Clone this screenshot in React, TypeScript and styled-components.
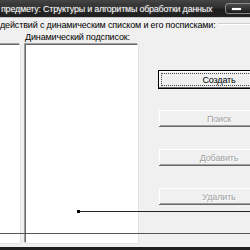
import React from 'react';
import styled, { createGlobalStyle } from 'styled-components';

const GlobalStyle = createGlobalStyle`
  html, body {
    margin: 0;
    padding: 0;
    background: #f0f0f0;
  }
  body {
    font-family: 'Liberation Sans', Arial, sans-serif;
  }
`;

const Window = styled.div`
  position: relative;
  width: 250px;
  height: 250px;
  overflow: hidden;
  display: flex;
  flex-direction: column;
  background: #f0f0f0;
  font-size: 9px;
  letter-spacing: -0.15px;
  color: #000;
`;

const TitleBar = styled.div`
  height: 17px;
  flex: none;
  display: flex;
  align-items: center;
  justify-content: space-between;
  background: linear-gradient(#454545 0%, #2e2e2e 45%, #1c1c1c 55%, #222 100%);
  border-bottom: 1px solid #c8c8c8;
`;

const Caption = styled.span`
  color: #fff;
  font-size: 9px;
  letter-spacing: -0.25px;
  padding-left: 1px;
  white-space: nowrap;
  text-shadow: 0 0 3px rgba(255, 255, 255, 0.35);
`;

const CaptionButton = styled.div`
  flex: none;
  width: 34px;
  height: 11px;
  margin-right: -9px;
  border: 1px solid #8a8a8a;
  border-radius: 3px;
  background: linear-gradient(#4a4a4a, #1a1a1a);
  display: flex;
  align-items: center;
  padding-left: 6px;
  box-sizing: border-box;

  &::before {
    content: '';
    width: 9px;
    height: 2px;
    background: #fff;
    box-shadow: 0 0 1px #fff;
  }
`;

const Content = styled.div`
  flex: 1;
  display: flex;
  flex-direction: column;
`;

const GroupHeader = styled.div`
  display: flex;
  align-items: center;
  height: 12px;
  margin-top: 1px;
  white-space: nowrap;

  &::after {
    content: '';
    flex: 1;
    height: 0;
    border-top: 1px solid #d0d0d0;
    border-bottom: 1px solid #fff;
    margin-left: 2px;
    margin-top: -2px;
  }
`;

const Body = styled.div`
  display: flex;
  align-items: flex-start;
`;

const ListBox = styled.div<{ $w: number; $h: number }>`
  flex: none;
  width: ${p => p.$w}px;
  height: ${p => p.$h}px;
  box-sizing: border-box;
  background: #fff;
  border-style: solid;
  border-width: 1px;
  border-color: #696969 #fff #fff #696969;
  box-shadow: -1px -1px 0 #a0a0a0, 1px 1px 0 #e3e3e3;
`;

const LeftList = styled(ListBox)`
  margin-left: -4px;
  margin-top: 13px;
`;

const Column = styled.div`
  flex: none;
  display: flex;
  flex-direction: column;
  margin-left: 5px;
`;

const Label = styled.div`
  height: 12px;
  line-height: 12px;
  margin-bottom: 1px;
  white-space: nowrap;
`;

const Buttons = styled.div`
  flex: none;
  display: flex;
  flex-direction: column;
  gap: 20px;
  margin-left: 20px;
  margin-top: 39px;
`;

const Button = styled.div<{ $disabled?: boolean; $default?: boolean }>`
  width: 122px;
  height: 19px;
  box-sizing: border-box;
  display: flex;
  align-items: center;
  justify-content: center;
  background: #f0f0f0;
  position: relative;
  color: ${p => (p.$disabled ? '#a0a0a0' : '#000')};
  text-shadow: ${p => (p.$disabled ? '1px 1px 0 #fff' : 'none')};
  border: 1px solid ${p => (p.$default ? '#000' : 'transparent')};
  box-shadow: ${p =>
    p.$default
      ? 'inset -1px -1px 0 #696969, inset 1px 1px 0 #fff'
      : 'inset -1px -1px 0 #696969, inset 1px 1px 0 #fff, inset -2px -2px 0 #a0a0a0'};

  &::after {
    content: '';
    display: ${p => (p.$default ? 'block' : 'none')};
    position: absolute;
    inset: 2px;
    border: 1px dotted #444;
  }
`;

const Overlay = styled.svg`
  position: absolute;
  left: 0;
  top: 0;
  pointer-events: none;
`;

const App: React.FC = () => (
  <>
    <GlobalStyle />
    <Window>
      <TitleBar>
        <Caption>предмету: Структуры и алгоритмы обработки данных</Caption>
        <CaptionButton />
      </TitleBar>
      <Content>
        <GroupHeader>действий с динамическим списком и его посписками:</GroupHeader>
        <Body>
          <LeftList $w={24} $h={199} />
          <Column>
            <Label>Динамический подсписок:</Label>
            <ListBox $w={113} $h={199} />
          </Column>
          <Buttons>
            <Button $default>Создать</Button>
            <Button $disabled>Поиск</Button>
            <Button $disabled>Добавить</Button>
            <Button $disabled>Удалить</Button>
          </Buttons>
        </Body>
      </Content>
      <Overlay width={250} height={250}>
        <line x1={78} y1={211.5} x2={250} y2={211.5} stroke="#222" strokeWidth={1} />
        <rect x={77} y={210} width={3} height={3} fill="#000" />
        <line x1={0} y1={233.5} x2={250} y2={233.5} stroke="#555" strokeWidth={1} />
        <rect x={0} y={247} width={250} height={3} fill="#1e1e1e" />
      </Overlay>
    </Window>
  </>
);

export default App;
